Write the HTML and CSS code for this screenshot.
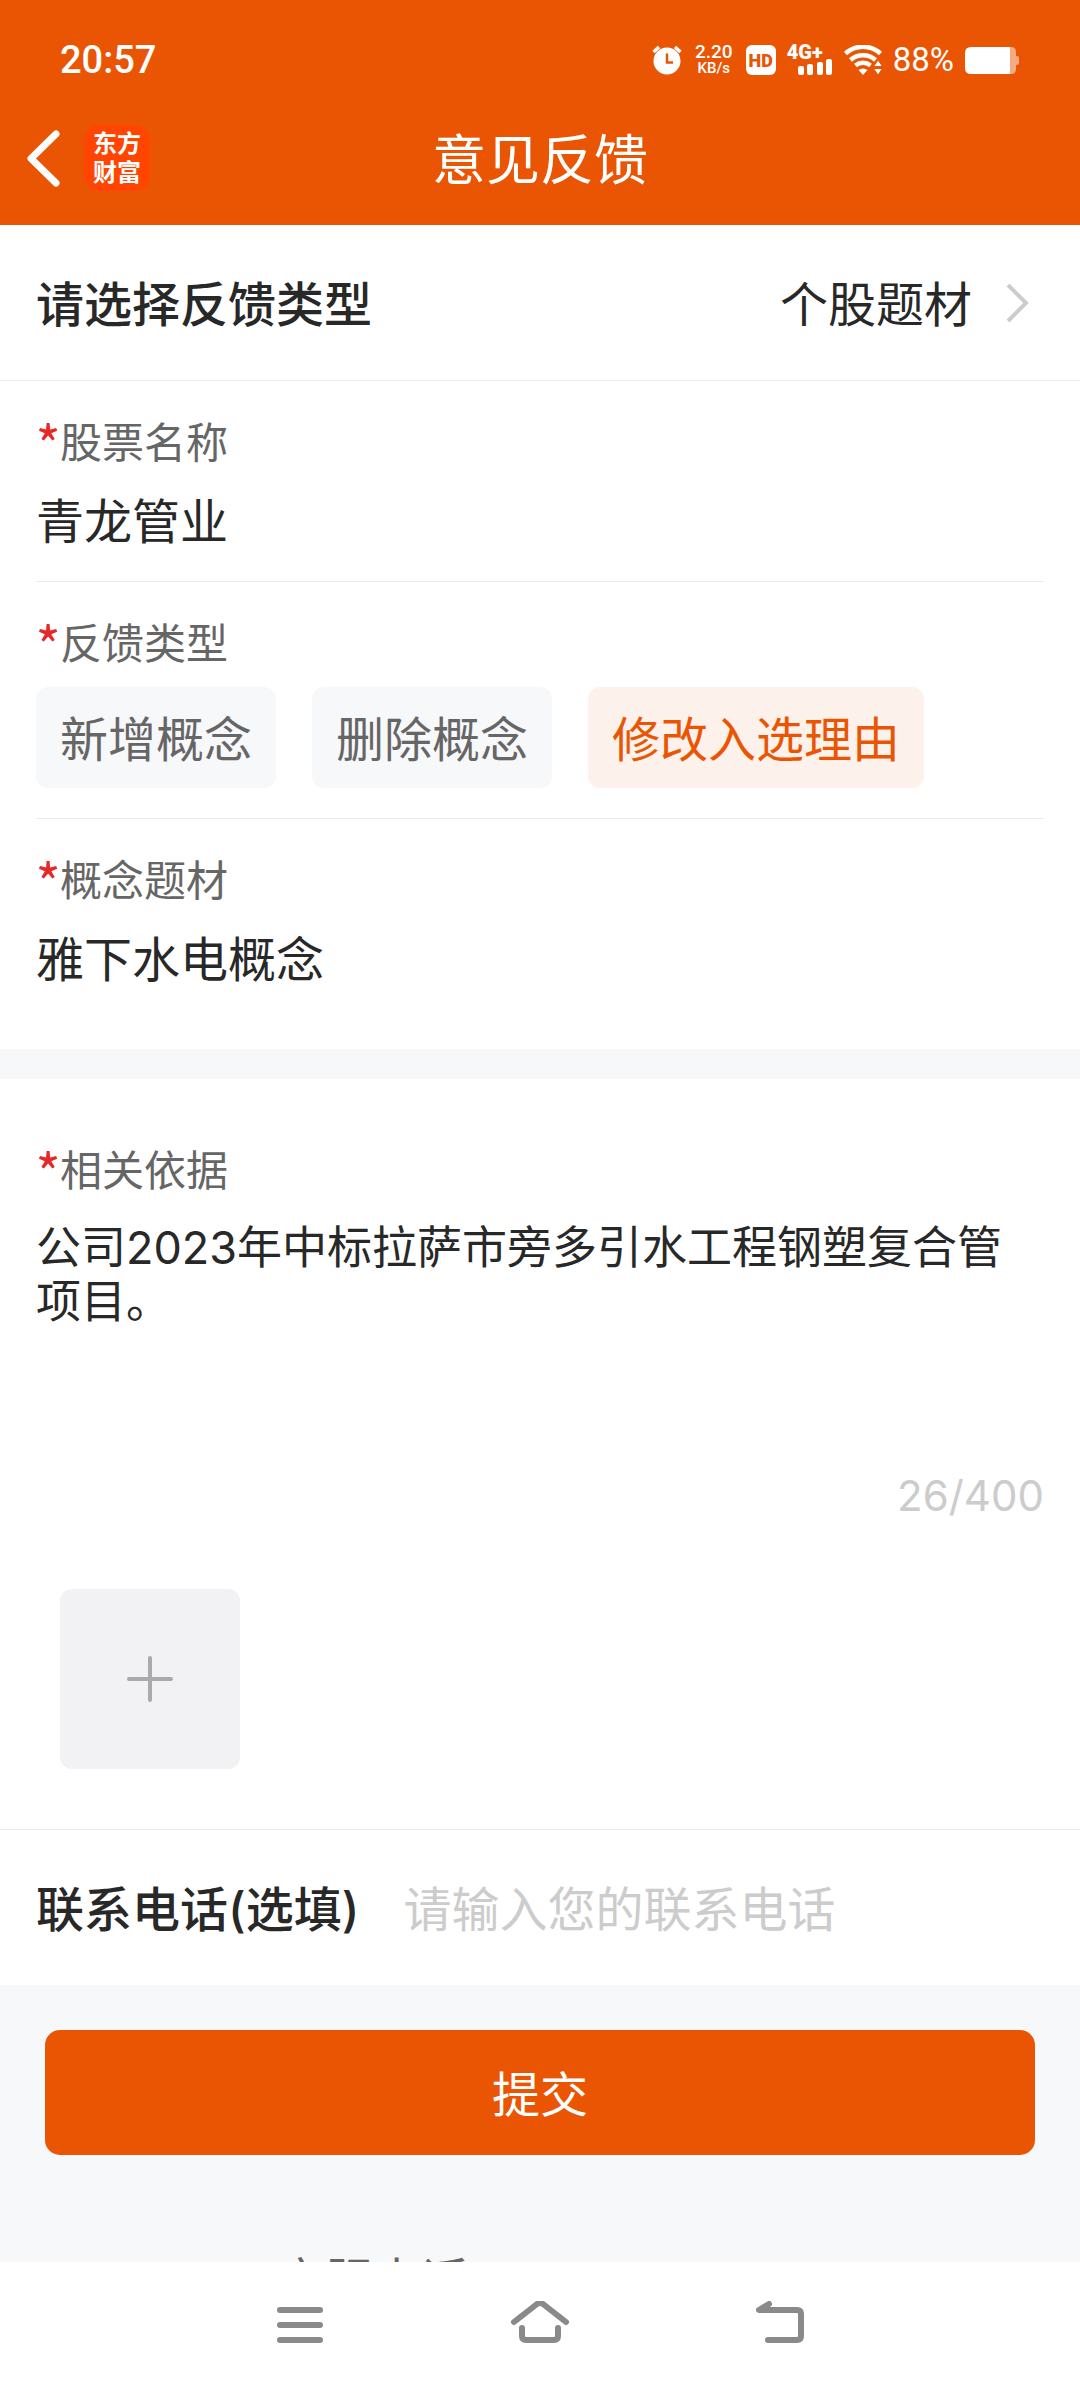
FILE: index.html
```html
<!DOCTYPE html>
<html lang="zh-CN">
<head>
<meta charset="utf-8">
<meta name="viewport" content="width=device-width, initial-scale=1">
<title>意见反馈</title>
<link rel="stylesheet" href="styles.css">
</head>
<body>
<header class="top">
  <div class="status">
    <span class="time">20:57</span>
    <div class="status-icons">
      <svg width="30" height="30" viewBox="0 0 30 30" aria-hidden="true">
        <circle cx="15" cy="16" r="13.5" fill="#fff"/>
        <path d="M1.5 7L7 2M28.5 7L23 2" stroke="#fff" stroke-width="3.5" fill="none"/>
        <path d="M15 8.500V17.500H21" stroke="#ea5504" stroke-width="2.5" fill="none"/>
      </svg>
      <span class="speed"><span class="speed-value">2.20</span><span class="speed-unit">KB/s</span></span>
      <span class="hd">HD</span>
      <span class="signal">
        <span class="signal-type">4G+</span>
        <svg width="36" height="16" viewBox="0 0 36 16" fill="#fff" aria-hidden="true">
          <rect x="1" y="7" width="6" height="9" rx="2"/><rect x="10" y="5" width="6" height="11" rx="2"/><rect x="20" y="3" width="6" height="13" rx="2"/><rect x="29" y="0" width="6" height="16" rx="2"/>
        </svg>
      </span>
      <svg width="38" height="30" viewBox="0 0 38 30" fill="none" aria-hidden="true">
        <path d="M1.500 8.500A26 26 0 0 1 36.500 8.500M6.500 15A19 19 0 0 1 31.500 15M11.500 20.500A12 12 0 0 1 26.500 20.500" stroke="#fff" stroke-width="4.500"/>
        <path d="M14.500 25Q19 22 23.500 25L19 30Z" fill="#fff"/>
        <path d="M29.500 21.500L34 15L38.500 21.500ZM29.500 23.500L34 30L38.500 23.500Z" fill="#fff" stroke="#ea5504" stroke-width="1"/>
      </svg>
      <span class="percent">88%</span>
      <svg width="54" height="27" viewBox="0 0 54 27" aria-hidden="true">
        <path d="M44 0H46Q51 0 51 5V9H52Q54 9 54 11V16Q54 18 52 18H51V22Q51 27 46 27H44Z" fill="#f6aa81"/>
        <path d="M6 0H45V27H6Q0 27 0 21V6Q0 0 6 0Z" fill="#fff"/>
      </svg>
    </div>
  </div>
  <nav class="titlebar">
    <div class="titlebar-left">
      <button class="icon-button" type="button" aria-label="返回">
        <svg width="36" height="60" viewBox="0 0 36 60"><path d="M32 6L7 30.500L32 55" fill="none" stroke="#fff" stroke-width="7" stroke-linecap="round" stroke-linejoin="round"/></svg>
      </button>
      <span class="logo"><span>东方</span><span>财富</span></span>
    </div>
    <h1 class="title">意见反馈</h1>
  </nav>
</header>

<main class="page">
  <form class="form">
    <button class="type-row" type="button">
      <span class="strong">请选择反馈类型</span>
      <span class="type-value">个股题材
        <svg width="24" height="42" viewBox="0 0 24 42" aria-hidden="true"><path d="M2 1L20 19L2 37" fill="none" stroke="#ccc" stroke-width="4"/></svg>
      </span>
    </button>

    <section class="group">
      <div class="field">
        <label class="label" for="stock"><span class="star">*</span>股票名称</label>
        <input class="text-input" id="stock" type="text" value="青龙管业">
      </div>
      <div class="field chips-field" role="group" aria-labelledby="kind">
        <span class="label" id="kind"><span class="star">*</span>反馈类型</span>
        <div class="chips">
          <button class="chip" type="button">新增概念</button>
          <button class="chip" type="button">删除概念</button>
          <button class="chip chip-active" type="button" aria-pressed="true">修改入选理由</button>
        </div>
      </div>
      <div class="field">
        <label class="label" for="concept"><span class="star">*</span>概念题材</label>
        <input class="text-input" id="concept" type="text" value="雅下水电概念">
      </div>
    </section>

    <section class="group evidence">
      <label class="label" for="reason"><span class="star">*</span>相关依据</label>
      <textarea class="reason" id="reason" maxlength="400">公司2023年中标拉萨市旁多引水工程钢塑复合管项目。</textarea>
      <span class="counter">26/400</span>
      <button class="upload" type="button" aria-label="添加图片">
        <svg width="48" height="48" viewBox="0 0 48 48"><path d="M24 3V45M3 24H45" stroke="#aaa" stroke-width="4" stroke-linecap="round"/></svg>
      </button>
    </section>

    <div class="phone-row">
      <label class="strong" for="phone">联系电话(选填)</label>
      <input class="text-input phone" id="phone" type="tel" placeholder="请输入您的联系电话">
    </div>

    <div class="submit-area">
      <button class="submit" type="submit">提交</button>
      <p class="hotline">客服电话</p>
    </div>
  </form>
</main>

<footer class="navbar">
  <button class="icon-button" type="button" aria-label="最近任务">
    <svg width="60" height="48" viewBox="0 0 60 48"><path d="M10 9H50M10 24H50M10 39H50"/></svg>
  </button>
  <button class="icon-button" type="button" aria-label="主屏幕">
    <svg width="60" height="48" viewBox="0 0 60 48"><path d="M4 21L27 3Q30 1 33 3L56 21M12 27V35Q12 39 16 39H44Q48 39 48 35V27"/></svg>
  </button>
  <button class="icon-button" type="button" aria-label="返回上一页">
    <svg width="60" height="48" viewBox="0 0 60 48"><path d="M19 3L9 9H47Q51 9 51 13V35Q51 39 47 39H18"/></svg>
  </button>
</footer>
</body>
</html>
```
FILE: styles.css
```css
* { box-sizing: border-box; }

body {
  margin: 0;
  height: 100vh;
  display: flex;
  flex-direction: column;
  overflow: hidden;
  background: #fff;
  color: #282828;
  font-family: Inter, "Noto Sans CJK SC", sans-serif;
  font-size: 48px;
  line-height: 60px;
}

button, input, textarea {
  margin: 0;
  padding: 0;
  border: 0;
  background: none;
  color: inherit;
  font: inherit;
}

svg { display: block; flex: none; }

.icon-button { display: block; }

/* Header */
.top {
  flex: none;
  background: #ea5504;
  color: #fff;
}

.status {
  display: flex;
  justify-content: space-between;
  align-items: center;
  height: 90px;
  padding: 30px 61px 0 60px;
  font-family: Roboto, sans-serif;
}

.time { font-size: 38px; font-weight: 500; }

.status-icons {
  display: flex;
  align-items: center;
  gap: 11px;
}

.speed {
  display: flex;
  flex-direction: column;
  align-items: center;
  width: 42px;
  font-weight: 500;
}

.speed-value { font-size: 19px; line-height: 17px; }
.speed-unit { font-size: 15px; line-height: 17px; }

.hd {
  width: 30px;
  height: 30px;
  border-radius: 6px;
  background: #fff;
  color: #ea5504;
  font-size: 18px;
  font-weight: 900;
  line-height: 31px;
  text-align: center;
}

.signal {
  display: flex;
  flex-direction: column;
  align-items: flex-end;
  width: 46px;
  height: 30px;
}

.signal-type {
  align-self: flex-start;
  font-size: 20px;
  font-weight: 900;
  line-height: 14px;
}

.percent { font-size: 33px; }

.titlebar {
  display: grid;
  grid-template-columns: 1fr auto 1fr;
  align-items: center;
  height: 135px;
  padding: 0 24px;
}

.titlebar-left {
  display: flex;
  align-items: center;
  gap: 24px;
}

.logo {
  display: flex;
  flex-direction: column;
  justify-content: center;
  align-items: center;
  width: 66px;
  height: 66px;
  border-radius: 15px;
  background: #ff4500;
  font-size: 24px;
  font-weight: 700;
  line-height: 29px;
}

.title {
  margin: 0;
  padding-top: 6px;
  font-size: 54px;
  font-weight: 400;
}

/* Form */
.page {
  flex: 1;
  min-height: 0;
  overflow: hidden;
}

.form { display: flex; flex-direction: column; }

.type-row {
  display: flex;
  justify-content: space-between;
  align-items: center;
  padding: 50px 50px 45px 36px;
  border-bottom: 1px solid #ebebeb;
}

.strong { font-weight: 500; }

.type-value {
  display: flex;
  align-items: center;
  gap: 34px;
}

.group { padding: 0 36px; }

.field {
  display: flex;
  flex-direction: column;
  gap: 19px;
  padding: 32px 0 29px;
}

.field + .field { border-top: 1px solid #ebebeb; }

.label {
  display: flex;
  color: #666;
  font-size: 42px;
}

.star {
  display: flex;
  justify-content: center;
  width: 24px;
  color: #e62828;
  font-family: "Noto Sans CJK SC", sans-serif;
  font-size: 54px;
}

.text-input {
  width: 100%;
  height: 60px;
}

.field.chips-field {
  gap: 13px;
  padding-bottom: 30px;
}

.chips {
  display: flex;
  flex-wrap: wrap;
  gap: 36px;
}

.chip {
  height: 101px;
  padding: 4px 24px 0;
  border-radius: 12px;
  background: #f7f8fa;
  color: #666;
}

.chip-active {
  background: #fdf1eb;
  color: #ea5504;
}

.evidence {
  display: flex;
  flex-direction: column;
  margin-top: 30px;
  border-top: 30px solid #f7f8fa;
  padding-top: 62px;
  padding-bottom: 60px;
}

.reason {
  height: 216px;
  margin-top: 20px;
  font-size: 45px;
  line-height: 54px;
  resize: none;
  overflow: hidden;
}

.counter {
  align-self: flex-end;
  margin-top: 29px;
  color: #ccc;
  font-size: 42px;
}

.upload {
  display: grid;
  place-items: center;
  width: 180px;
  height: 180px;
  margin: 63px 24px 0;
  border-radius: 12px;
  background: #f2f2f4;
}

.phone-row {
  display: flex;
  align-items: center;
  gap: 44px;
  padding: 50px 36px 45px;
  border-top: 1px solid #ebebeb;
}

.phone-row .strong { flex: none; }
.phone { flex: 1; min-width: 0; }
.phone::placeholder { color: #ccc; opacity: 1; }

.submit-area {
  padding: 45px 45px 60px;
  background: #f7f8fa;
}

.submit {
  display: block;
  width: 100%;
  height: 125px;
  padding-top: 4px;
  border-radius: 15px;
  background: #ea5504;
  color: #fff;
}

.hotline {
  margin: 96px 0 0 232px;
  color: #666;
}

/* System navigation */
.navbar {
  flex: none;
  display: flex;
  justify-content: center;
  align-items: center;
  gap: 180px;
  height: 126px;
  background: #fff;
}

.navbar path {
  fill: none;
  stroke: #8a8a8a;
  stroke-width: 6;
  stroke-linecap: round;
  stroke-linejoin: round;
}
```
